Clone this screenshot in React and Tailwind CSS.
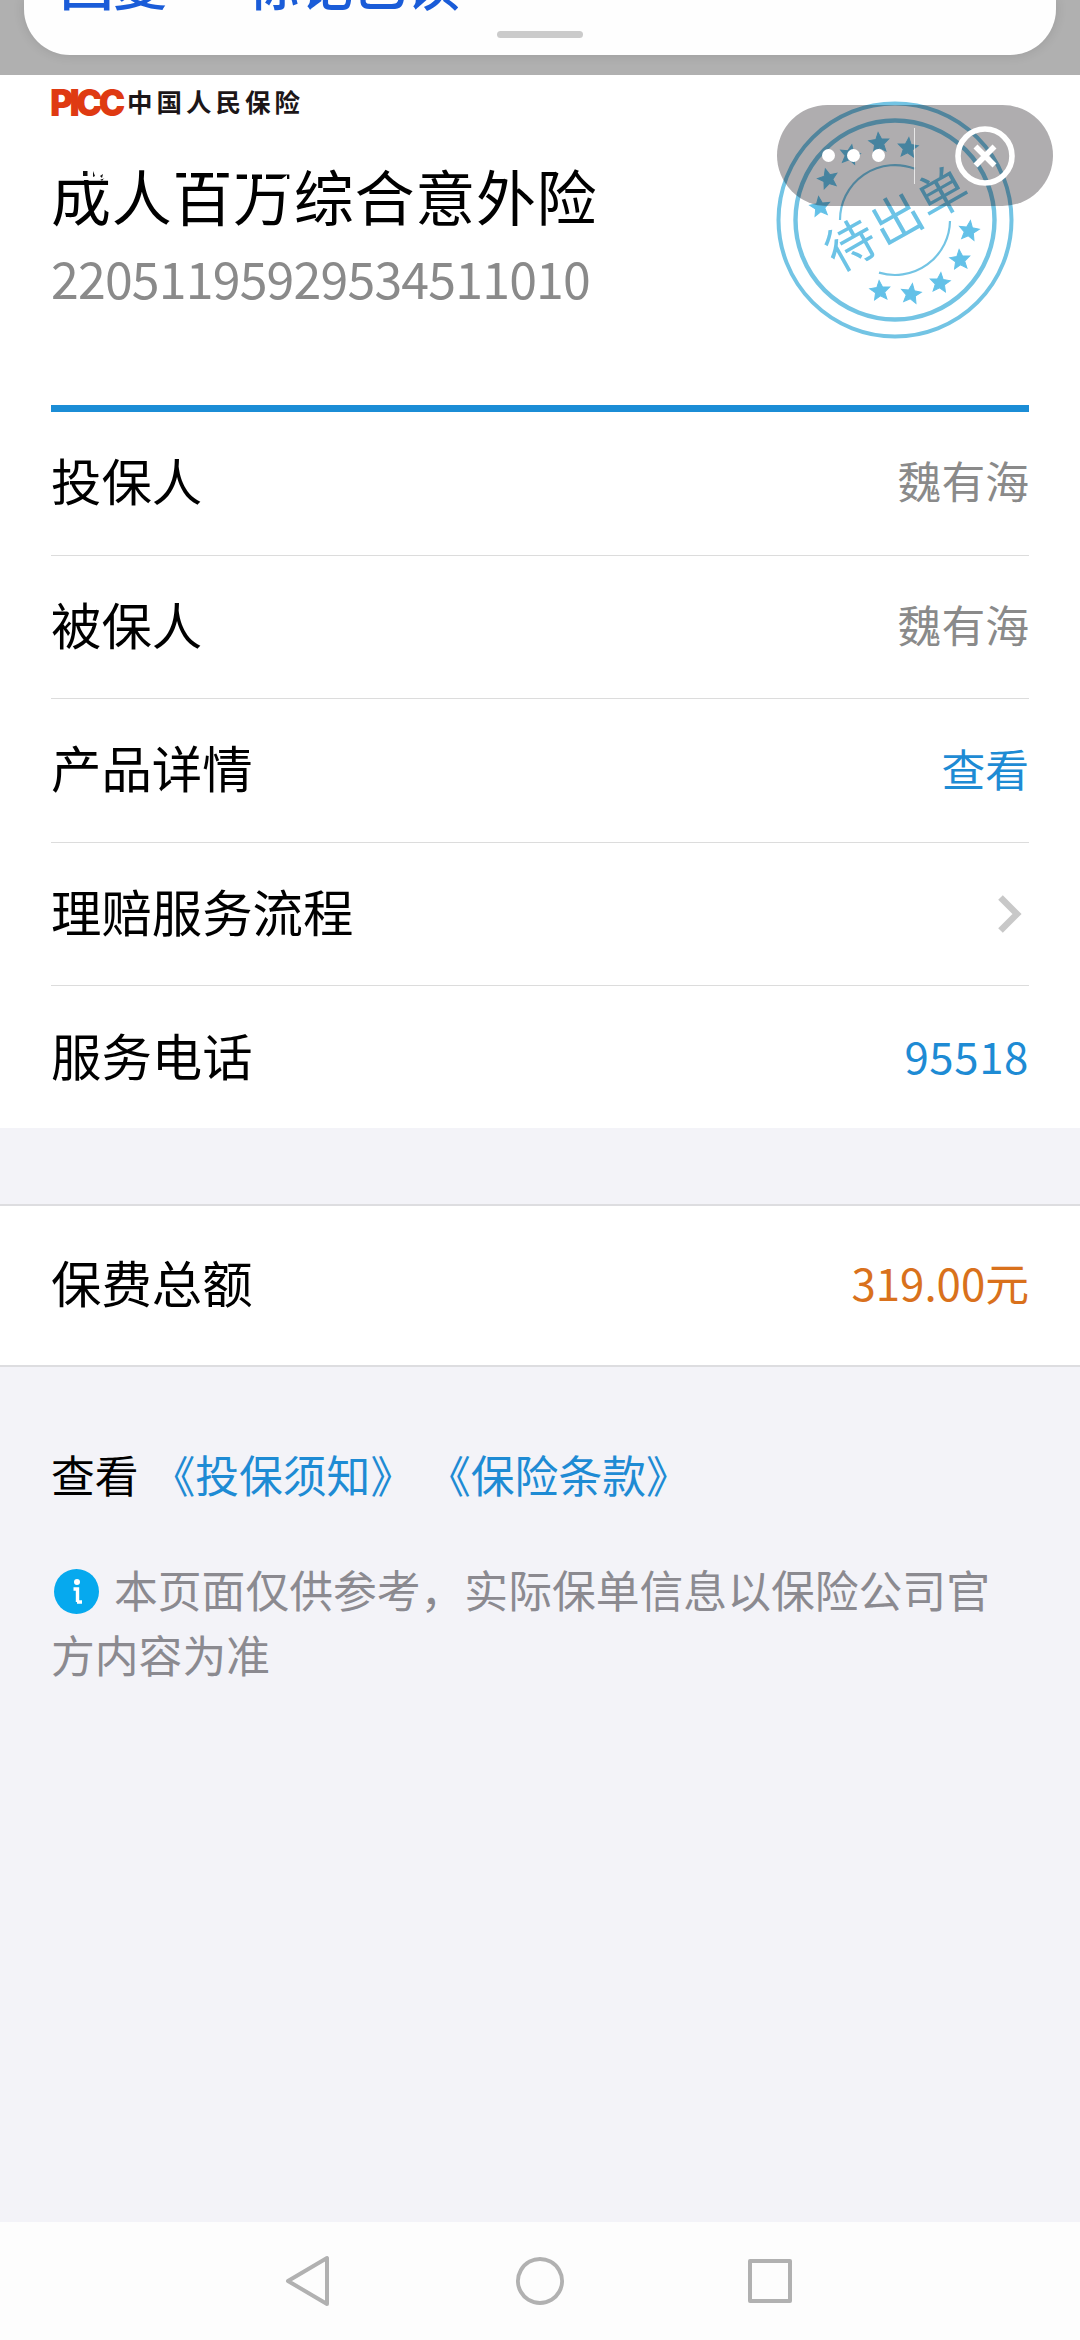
const rows = [
  { label: "投保人", value: "魏有海", tone: "text-[#8a8a8a]" },
  { label: "被保人", value: "魏有海", tone: "text-[#8a8a8a]" },
  { label: "产品详情", value: "查看", tone: "text-[#1e8bd4]" },
  { label: "理赔服务流程", arrow: true },
  { label: "服务电话", value: "95518", tone: "text-[#1e8bd4] tracking-[0.6px]" },
];

const stars = [
  [-75, -13, -8],
  [-67, -41, -15],
  [-45, -65, 10],
  [-16, -77, -5],
  [13, -72, 5],
  [74, 11, 8],
  [65, 40, -5],
  [45, 63, 5],
  [16, 74, 8],
  [-15, 71, -5],
];

const STAR =
  "M0 -10.5 L2.9 -3.7 L10 -3.2 L4.6 1.5 L6.2 8.5 L0 4.8 L-6.2 8.5 L-4.6 1.5 L-10 -3.2 L-2.9 -3.7 Z";

function Stamp() {
  return (
    <svg
      className="absolute top-[25px] right-[65px] w-[240px] h-[240px]"
      viewBox="-120 -120 240 240"
      fill="none"
      stroke="#73c4e4"
    >
      <circle r="116.5" strokeWidth="4" />
      <circle r="99.5" strokeWidth="4.4" />
      <path d="M-55 0 A55 55 0 0 1 20 -51.2" strokeWidth="2.2" />
      <path d="M55 1 A55 55 0 0 1 -16 52.6" strokeWidth="2.2" />
      {stars.map(([x, y, r], i) => (
        <path
          key={i}
          d={STAR}
          transform={`translate(${x} ${y}) rotate(${r})`}
          fill="#63c1e8"
          stroke="#63c1e8"
        />
      ))}
      <text
        transform="rotate(-29.5)"
        x="3"
        y="18"
        textAnchor="middle"
        fontSize="50"
        letterSpacing="2.4"
        fill="#6cc3e6"
        stroke="none"
      >
        待出单
      </text>
    </svg>
  );
}

function Capsule() {
  return (
    <div className="absolute top-[30px] right-[27px] w-[276px] h-[101px] rounded-full bg-[#0c060c]/33 flex items-center">
      <div className="w-[137px] flex justify-center gap-[12px] pl-[16px]">
        <span className="size-[13px] rounded-full bg-white" />
        <span className="size-[13px] rounded-full bg-white" />
        <span className="size-[13px] rounded-full bg-white" />
      </div>
      <span className="w-px h-[56px] bg-white/70" />
      <svg className="w-[60px] h-[60px] ml-[40px]" viewBox="0 0 60 60" fill="none" stroke="#fff">
        <circle cx="30" cy="30" r="27" strokeWidth="5.6" />
        <path d="M20.5 20.5 L39.5 39.5 M39.5 20.5 L20.5 39.5" strokeWidth="5.6" />
      </svg>
    </div>
  );
}

function Notice() {
  return (
    <div className="h-[75px] bg-[#b0b0b0] px-[24px] overflow-hidden">
      <div className="relative h-[55px] bg-[#fefefe] rounded-b-[46px] shadow-[0_0_12px_rgba(0,0,0,0.12)] overflow-hidden">
        <div className="flex gap-[79px] pl-[36px] -mt-[47px] text-[53.5px] leading-[60px] font-medium text-[#1a5cd8] whitespace-nowrap">
          <span>回复</span>
          <span>标记已读</span>
        </div>
        <span className="absolute left-[473px] top-[31px] w-[86px] h-[7px] rounded-full bg-[#cbcbcb]" />
      </div>
    </div>
  );
}

// white status bar glyphs lying over the title
function StatusBits() {
  return (
    <svg className="absolute left-0 top-[90px] w-[260px] h-[20px]" viewBox="51 165 260 20" fill="#fff">
      <path d="M82 165 H106 V178 L99 180 H82 Z" />
      <path d="M83 171 h4.5 v5 h-4.5 Z M93 171 l2 5 l-2 1 Z M100 176 l3 -2 l-1 4 Z" fill="#111" />
      <path d="M186 165 h5 v15 h-5 Z M213 165 h4 v15 h-4 Z M247 165 h5 v15 h-5 Z M262 165 h4 v15 h-4 Z" />
      <path d="M279 181 l8 -6 v6 Z" />
    </svg>
  );
}

function Header() {
  return (
    <header className="relative h-[330px] mx-[51px]">
      <div className="flex items-center h-[28px] pt-[13px] box-content">
        <span className="w-[76px] h-[28px] pt-[1px] font-['Inter'] font-black text-[37px] leading-[28px] tracking-[-4px] text-[#df3a12] origin-left scale-x-[0.96] -ml-[1px]">
          PICC
        </span>
        <span className="text-[25.5px] leading-[28px] font-bold tracking-[4px] -mt-[2px] ml-[1px] text-[#1c1618]">
          中国人民保险
        </span>
      </div>
      <h1 className="mt-[-28px] text-[60px] leading-[80px] tracking-[0.7px] pt-[67px]">
        成人百万综合意外险
      </h1>
      <p className="text-[50px] leading-[64px] tracking-[-0.8px] text-[#8a8a8a] pt-[10px]">
        22051195929534511010
      </p>
      <StatusBits />
    </header>
  );
}

function Row({ label, value, tone, arrow }) {
  return (
    <li className="flex items-center justify-between h-[143.6px] border-b border-[#dcdcdc] last:border-0">
      <span className="text-[50.4px] pb-[6px]">{label}</span>
      {arrow ? (
        <svg className="w-[26px] h-[40px] mr-[6px]" viewBox="0 0 26 40" fill="none">
          <path d="M3.5 3.5 L20 20 L3.5 36.5" stroke="#c8c8c8" strokeWidth="6.5" />
        </svg>
      ) : (
        <span className={`text-[43.8px] pb-[4px] ${tone}`}>{value}</span>
      )}
    </li>
  );
}

function NavBar() {
  return (
    <nav className="h-[118px] bg-[#fdfdfd] flex items-center justify-center gap-[174px]">
      {["M45 5 V51 L6 28 Z", "M28 6 a22 22 0 1 0 0.01 0 Z", "M8 8 H48 V48 H8 Z"].map((d) => (
        <svg key={d} className="size-[56px]" viewBox="0 0 56 56" fill="none">
          <path d={d} stroke="#b1b1b1" strokeWidth="4" strokeLinejoin="round" />
        </svg>
      ))}
    </nav>
  );
}

function App() {
  return (
    <div className="w-[1080px] h-[2340px] flex flex-col overflow-hidden bg-[#f3f3f8] text-black font-['Noto_Sans_CJK_SC',sans-serif]">
      <Notice />

      <section className="relative h-[1053px] bg-white">
        <Stamp />
        <Header />
        <ul className="mx-[51px] border-t-[7px] border-[#1b8dd6] leading-none">
          {rows.map((row) => (
            <Row key={row.label} {...row} />
          ))}
        </ul>
        <Capsule />
      </section>

      <section className="mt-[76px] h-[163px] px-[51px] bg-white border-y-2 border-[#dddde0] flex items-center justify-between leading-none">
        <span className="text-[50.4px] pb-[6px]">保费总额</span>
        <span className="text-[43.8px] pb-[5px] text-[#d9711c]">319.00元</span>
      </section>

      <section className="flex-1 px-[51px] pt-[75px] text-[43.8px] leading-[65px]">
        <p className="[word-spacing:3px]">
          查看 <a className="text-[#1e8bd4]">《投保须知》</a> <a className="text-[#1e8bd4]">《保险条款》</a>
        </p>
        <p className="mt-[50px] text-[#8b8a90]">
          <svg className="inline-block size-[45px] ml-[3px] mr-[15px] -mt-[9px]" viewBox="0 0 45 45">
            <circle cx="22.5" cy="22.5" r="22.5" fill="#06a9ee" />
            <circle cx="23" cy="13" r="3" fill="#fff" />
            <path d="M19.5 20 H23.5 V33 M23 33 H28" stroke="#fff" strokeWidth="3.4" fill="none" />
          </svg>
          本页面仅供参考，实际保单信息以保险公司官方内容为准
        </p>
      </section>

      <NavBar />
    </div>
  );
}

export default App;
